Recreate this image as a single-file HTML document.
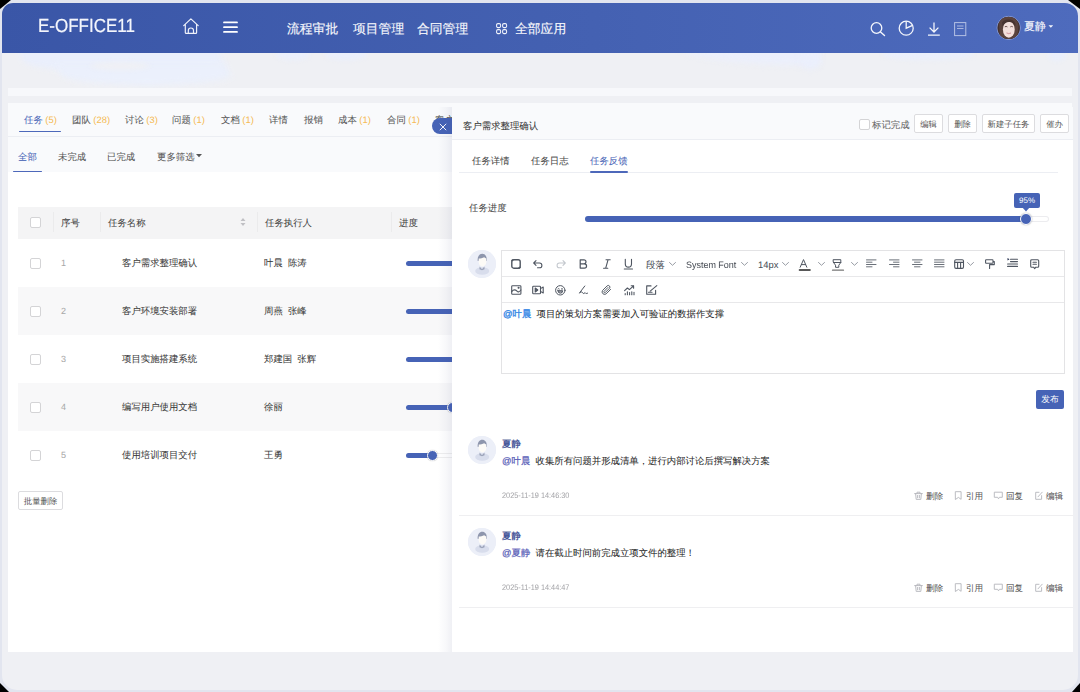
<!DOCTYPE html>
<html><head><meta charset="utf-8">
<style>
*{margin:0;padding:0;box-sizing:border-box}
html,body{width:1080px;height:692px;overflow:hidden;background:#000}
body{font-family:"Liberation Sans",sans-serif;color:#333;position:relative;text-rendering:geometricPrecision}
.frame{position:absolute;left:0;top:0;width:1080px;height:692px;background:#e2e5ef;
 clip-path:polygon(11px 0,1068px 0,1080px 9px,1080px 683px,1072px 692px,9px 692px,0 683px,0 9px)}
.screen{position:absolute;left:2px;top:3px;width:1076px;height:687px;background:#eff0f4;border-radius:11px 13px 15px 15px;overflow:hidden}
.pg{position:absolute;left:-2px;top:-3px;width:1080px;height:692px}
.a{position:absolute}
.t{position:absolute;white-space:nowrap;line-height:12px;height:12px}
.hdr{position:absolute;left:0;top:0;width:1080px;height:53px;background:linear-gradient(90deg,#3a56a7 0%,#4461b2 55%,#4e6bbd 100%)}
.nav{font-size:12.8px;color:#f6f7fc;line-height:14px;height:14px;-webkit-text-stroke:0.15px #f6f7fc}
svg{position:absolute;overflow:visible}
.tb{font-size:9.4px;color:#555;line-height:12px;-webkit-text-stroke:0.04px currentColor}
.tb b{font-weight:normal;color:#f6bb54}
.ac{font-size:8.6px!important;color:#555}
.cb{width:11px;height:11px;border:1px solid #d4d4d6;border-radius:2px;background:#fff}
.av{width:28px;height:28px;border-radius:50%;background:#e9ecf5;overflow:hidden}
.btn{border:1px solid #dcdcdf;border-radius:2px;background:#fff;font-size:8.4px;color:#555;text-align:center;line-height:18px;white-space:nowrap}
</style></head><body>
<div class="frame"></div>
<div class="screen"><div class="pg">
  <!-- header -->
  <div class="hdr"></div>
  <div class="t" style="left:38px;top:16.7px;font-size:19px;line-height:20px;height:20px;color:#f4f6fc;-webkit-text-stroke:0.2px #f4f6fc;transform:scaleX(0.895);transform-origin:0 0">E-OFFICE11</div>
  <svg style="left:183px;top:18px" width="17" height="17" viewBox="0 0 17 17"><path d="M0.7 7.6 L7.9 0.9 L15.2 7.6 M2.3 6.2 V14.5 Q2.3 15.4 3.2 15.4 H12.7 Q13.6 15.4 13.6 14.5 V6.2 M5.3 15.4 V12.6 A2.6 2.6 0 0 1 10.5 12.6 V15.4" fill="none" stroke="#eef1fa" stroke-width="1.2" stroke-linejoin="round" stroke-linecap="round"/></svg>
  <svg style="left:223px;top:21px" width="15" height="12" viewBox="0 0 15 12"><path d="M1 1.4H14M1 6.2H14M1 10.9H14" stroke="#fff" stroke-width="1.8" stroke-linecap="round"/></svg>
  <div class="t nav" style="left:287px;top:22px">流程审批</div>
  <div class="t nav" style="left:353px;top:22px">项目管理</div>
  <div class="t nav" style="left:417px;top:22px">合同管理</div>
  <svg style="left:495.5px;top:23px" width="12" height="12" viewBox="0 0 12 12"><g fill="none" stroke="#f0f3fb" stroke-width="1.05"><rect x="0.6" y="0.6" width="4" height="4" rx="1.3"/><rect x="6.6" y="0.6" width="4" height="4" rx="1.3"/><rect x="0.6" y="6.6" width="4" height="4" rx="1.3"/><rect x="6.6" y="6.6" width="4" height="4" rx="1.3"/></g></svg>
  <div class="t nav" style="left:515px;top:22px">全部应用</div>
  <svg style="left:870px;top:22.3px" width="16" height="14" viewBox="0 0 16 14"><circle cx="6.5" cy="6" r="5.3" fill="none" stroke="#f4f6fc" stroke-width="1.3"/><path d="M10.5 10 L14.5 13.5" stroke="#f4f6fc" stroke-width="1.4" stroke-linecap="round"/></svg>
  <svg style="left:898px;top:20px" width="17" height="17" viewBox="0 0 17 17"><circle cx="8.2" cy="8.2" r="7" fill="none" stroke="#f4f6fc" stroke-width="1.3"/><path d="M8.2 1.2 V8.2 L14.6 5.3" fill="none" stroke="#f4f6fc" stroke-width="1.3"/></svg>
  <svg style="left:927px;top:20px" width="14" height="16" viewBox="0 0 14 16"><path d="M7 2.4 V12 M2.6 7.6 L7 12 L11.4 7.6 M1 15.2 H12.8" fill="none" stroke="#f4f6fc" stroke-width="1.3"/></svg>
  <svg style="left:954px;top:22px" width="13" height="14" viewBox="0 0 13 14"><rect x="0.6" y="0.6" width="11.2" height="13" fill="none" stroke="#b4c0e4" stroke-width="1"/><path d="M3 4H9.5M3 6.5H9.5" stroke="#b4c0e4" stroke-width="0.9"/></svg>
  <svg style="left:996px;top:16px" width="26" height="24" viewBox="0 0 26 24"><circle cx="12.7" cy="11.9" r="11.6" fill="none" stroke="#aeb9e6" stroke-width="0.8" opacity="0.8"/><defs><clipPath id="hc"><circle cx="12.7" cy="11.9" r="11.2"/></clipPath></defs><g clip-path="url(#hc)"><rect width="26" height="24" fill="#45322e"/><path d="M3 8 C4 2 9 0.5 13 0.8 C18 1 22 4 22.5 10 L21 24 H4Z" fill="#5a423c"/><ellipse cx="12.8" cy="13.4" rx="5.9" ry="8.3" fill="#f3dfda"/><path d="M6 6.5 C8 3.5 11 3.2 13 3.6 C15.5 3.2 18 4.5 19.6 7.8 L19.2 10.5 C17.5 7 15 5.8 13.2 6 C10.8 5.8 8 7.5 6.6 10.5Z" fill="#47332f"/><path d="M8.8 10.8 Q10.2 10 11.4 10.9 M14.3 10.9 Q15.5 10 16.8 10.8" stroke="#5d4240" stroke-width="0.9" fill="none"/><path d="M10.6 17 Q12.8 18.6 15 17 Q12.8 18 10.6 17Z" fill="#c98088" stroke="#d49aa0" stroke-width="0.7"/><path d="M7 21.5 C9.5 23.5 16 23.5 18.5 21.5 L19 24 H7Z" fill="#111"/></g></svg>
  <div class="t nav" style="left:1024px;top:21px;font-size:11px;line-height:12px;height:12px">夏静</div>
  <svg style="left:1048px;top:25px" width="6" height="4" viewBox="0 0 6 4"><path d="M0.5 0.3H5.2L2.85 2.8Z" fill="#f4f6fc"/></svg>

  <!-- faint strip -->
  <div class="a" style="left:8px;top:88px;width:1064px;height:8px;background:#f7f8fb"></div>
  <div class="a" style="left:0;top:53px;width:1080px;height:35px;overflow:hidden">
    <div class="a" style="left:22px;top:-6px;width:200px;height:26px;background:#eaeffc;border-radius:0 0 40% 50%;filter:blur(3px);transform:skewX(20deg)"></div>
    <div class="a" style="left:60px;top:10px;width:170px;height:22px;background:#ebf0fc;border-radius:0 0 50% 50%;filter:blur(3px);transform:skewX(20deg)"></div>
    <div class="a" style="left:90px;top:9px;width:60px;height:8px;background:#eff0f5;border-radius:50%;filter:blur(2px)"></div>
    <div class="a" style="left:276px;top:-4px;width:34px;height:11px;background:#eaeffc;border-radius:50%;filter:blur(2px)"></div>
    <div class="a" style="left:325px;top:-4px;width:42px;height:11px;background:#eaeffc;border-radius:50%;filter:blur(2px)"></div>
    <div class="a" style="left:680px;top:-6px;width:140px;height:18px;background:#ebeffc;border-radius:0 0 0 100%;filter:blur(3px)"></div>
    <div class="a" style="left:800px;top:-6px;width:20px;height:22px;background:#ebeffc;border-radius:50%;filter:blur(3px)"></div>
    <div class="a" style="left:882px;top:-4px;width:92px;height:11px;background:#eaeffc;border-radius:50%;filter:blur(2px)"></div>
    <div class="a" style="left:1048px;top:-4px;width:18px;height:12px;background:#eaeffc;border-radius:50%;filter:blur(2px)"></div>
  </div>
  <!-- left panel -->
  <div class="a" style="left:8px;top:103px;width:1064px;height:549px;background:#fff"></div>
  <div class="a" style="left:8px;top:103px;width:1064px;height:69px;background:#f9fafc"></div>
  <div class="a" style="left:8px;top:136px;width:1064px;height:1px;background:#eceef3"></div>
  <div class="a" style="left:18.5px;top:130.5px;width:42.5px;height:1.8px;border-radius:1px;background:#4d68ba"></div>
  <div class="a" style="left:12.5px;top:170.6px;width:29.5px;height:1.8px;border-radius:1px;background:#4d68ba"></div>

  <!-- tabs -->
  <div class="t tb" style="left:24px;top:114px;color:#4663b6">任务 <b>(5)</b></div>
  <div class="t tb" style="left:72px;top:114px">团队 <b>(28)</b></div>
  <div class="t tb" style="left:125px;top:114px">讨论 <b>(3)</b></div>
  <div class="t tb" style="left:172px;top:114px">问题 <b>(1)</b></div>
  <div class="t tb" style="left:221px;top:114px">文档 <b>(1)</b></div>
  <div class="t tb" style="left:269px;top:114px">详情</div>
  <div class="t tb" style="left:304px;top:114px">报销</div>
  <div class="t tb" style="left:338px;top:114px">成本 <b>(1)</b></div>
  <div class="t tb" style="left:387px;top:114px">合同 <b>(1)</b></div>
  <div class="t tb" style="left:435px;top:114px">客户</div>
  <div class="t tb" style="left:18px;top:151px;color:#4663b6">全部</div>
  <div class="t tb" style="left:58px;top:151px">未完成</div>
  <div class="t tb" style="left:107px;top:151px">已完成</div>
  <div class="t tb" style="left:157px;top:151px">更多筛选</div>
  <svg style="left:196px;top:154px" width="6" height="4" viewBox="0 0 6 4"><path d="M0 0H6L3 3.2Z" fill="#555"/></svg>
  <!-- table header -->
  <div class="a" style="left:18px;top:207px;width:434px;height:32px;background:#f4f4f5"></div>
  <div class="a cb" style="left:30px;top:217px"></div>
  <div class="a" style="left:53px;top:212px;width:1px;height:20px;background:#ebebec"></div>
  <div class="a" style="left:100px;top:212px;width:1px;height:20px;background:#ebebec"></div>
  <div class="a" style="left:257px;top:212px;width:1px;height:20px;background:#ebebec"></div>
  <div class="a" style="left:391px;top:212px;width:1px;height:20px;background:#ebebec"></div>
  <div class="t tb" style="left:61px;top:217px;color:#404040">序号</div>
  <div class="t tb" style="left:108px;top:217px;color:#404040">任务名称</div>
  <svg style="left:240px;top:217px" width="6" height="10" viewBox="0 0 6 10"><path d="M0.5 4 L3 1 L5.5 4Z M0.5 6 L3 9 L5.5 6Z" fill="#c0c0c4"/></svg>
  <div class="t tb" style="left:265px;top:217px;color:#404040">任务执行人</div>
  <div class="t tb" style="left:399px;top:217px;color:#404040">进度</div>
  <!-- rows -->
  <div class="a" style="left:18px;top:287px;width:434px;height:48px;background:#f8f8f9"></div>
  <div class="a" style="left:18px;top:383px;width:434px;height:48px;background:#f8f8f9"></div>
  <div class="a cb" style="left:30px;top:258px"></div>
  <div class="t tb" style="left:61px;top:257px;color:#a8a8a8;font-size:9px">1</div>
  <div class="t tb" style="left:122px;top:257px;color:#383838">客户需求整理确认</div>
  <div class="t tb" style="left:264px;top:257px;color:#383838">叶晨&nbsp;&nbsp;陈涛</div>
  <div class="a cb" style="left:30px;top:306px"></div>
  <div class="t tb" style="left:61px;top:305px;color:#a8a8a8;font-size:9px">2</div>
  <div class="t tb" style="left:122px;top:305px;color:#383838">客户环境安装部署</div>
  <div class="t tb" style="left:264px;top:305px;color:#383838">周燕&nbsp;&nbsp;张峰</div>
  <div class="a cb" style="left:30px;top:354px"></div>
  <div class="t tb" style="left:61px;top:353px;color:#a8a8a8;font-size:9px">3</div>
  <div class="t tb" style="left:122px;top:353px;color:#383838">项目实施搭建系统</div>
  <div class="t tb" style="left:264px;top:353px;color:#383838">郑建国&nbsp;&nbsp;张辉</div>
  <div class="a cb" style="left:30px;top:402px"></div>
  <div class="t tb" style="left:61px;top:401px;color:#a8a8a8;font-size:9px">4</div>
  <div class="t tb" style="left:122px;top:401px;color:#383838">编写用户使用文档</div>
  <div class="t tb" style="left:264px;top:401px;color:#383838">徐丽</div>
  <div class="a cb" style="left:30px;top:450px"></div>
  <div class="t tb" style="left:61px;top:449px;color:#a8a8a8;font-size:9px">5</div>
  <div class="t tb" style="left:122px;top:449px;color:#383838">使用培训项目交付</div>
  <div class="t tb" style="left:264px;top:449px;color:#383838">王勇</div>

  <div class="a" style="left:406px;top:261px;width:60px;height:5px;border-radius:3px;background:#4663b6"></div>
  <div class="a" style="left:406px;top:309px;width:60px;height:5px;border-radius:3px;background:#4663b6"></div>
  <div class="a" style="left:406px;top:357px;width:60px;height:5px;border-radius:3px;background:#4663b6"></div>
  <div class="a" style="left:406px;top:405px;width:60px;height:5px;border-radius:3px;background:#4663b6"></div>
  <div class="a" style="left:447px;top:402px;width:11px;height:11px;border-radius:50%;background:#4663b6;border:1.5px solid #fff;box-shadow:0 0 1px rgba(0,0,0,.3)"></div>
  <div class="a" style="left:406px;top:453px;width:60px;height:5px;border-radius:3px;background:#fff;box-shadow:inset 0 0 0 1px #eee"></div>
  <div class="a" style="left:406px;top:453px;width:27px;height:5px;border-radius:3px;background:#4663b6"></div>
  <div class="a" style="left:427px;top:450px;width:11px;height:11px;border-radius:50%;background:#4663b6;border:1.5px solid #fff;box-shadow:0 0 1px rgba(0,0,0,.3)"></div>
  <div class="a btn" style="left:18px;top:491px;width:45px;height:19px">批量删除</div>

  <!-- close button -->
  <div class="a" style="left:432px;top:118px;width:22px;height:16px;border-radius:8px 0 0 8px;background:#4663b6"></div>
  <svg style="left:438.5px;top:122.5px" width="8" height="8" viewBox="0 0 8 8"><path d="M0.8 0.8L7.2 7.2M7.2 0.8L0.8 7.2" stroke="#fff" stroke-width="0.95"/></svg>
  <!-- right panel -->
  <div class="a" style="left:438px;top:107px;width:14px;height:545px;background:linear-gradient(90deg,rgba(40,50,110,0) 0%,rgba(40,50,110,.035) 60%,rgba(40,50,110,.075) 100%)"></div>
  <div class="a" style="left:452px;top:107px;width:621px;height:545px;background:#fff"></div>
  <div class="a" style="left:452px;top:107px;width:621px;height:33px;background:#f9fafc;border-bottom:1px solid #eceef3"></div>
  <div class="t tb" style="left:463px;top:120px;color:#333">客户需求整理确认</div>
  <div class="a cb" style="left:859px;top:119px"></div>
  <div class="t tb" style="left:872px;top:119px;color:#666">标记完成</div>
  <div class="a btn" style="left:914px;top:114px;width:29px;height:19px">编辑</div>
  <div class="a btn" style="left:948px;top:114px;width:29px;height:19px">删除</div>
  <div class="a btn" style="left:982px;top:114px;width:53px;height:19px">新建子任务</div>
  <div class="a btn" style="left:1040px;top:114px;width:29px;height:19px">催办</div>
  <!-- right tabs -->
  <div class="t tb" style="left:472px;top:155px;color:#444">任务详情</div>
  <div class="t tb" style="left:531px;top:155px;color:#444">任务日志</div>
  <div class="t tb" style="left:590px;top:155px;color:#4663b6">任务反馈</div>
  <div class="a" style="left:459px;top:172px;width:599px;height:1px;background:#eceef3"></div>
  <div class="a" style="left:590px;top:171px;width:38px;height:1.8px;border-radius:1px;background:#4d68ba"></div>
  <!-- progress -->
  <div class="t tb" style="left:469px;top:202px;color:#444">任务进度</div>
  <div class="a" style="left:585px;top:216px;width:464px;height:6px;border-radius:3px;background:#fff;box-shadow:inset 0 0 0 1px #ececef"></div>
  <div class="a" style="left:585px;top:216px;width:441px;height:6px;border-radius:3px;background:#4663b6"></div>
  <div class="a" style="left:1020px;top:213px;width:12px;height:12px;border-radius:50%;background:#4663b6;border:1.5px solid #fff;box-shadow:0 0 1.5px rgba(0,0,0,.35)"></div>
  <div class="a" style="left:1014px;top:193px;width:26px;height:15px;border-radius:2px;background:#4663b6;color:#fff;font-size:8px;line-height:15px;text-align:center">95%</div>
  <svg style="left:1022px;top:207px" width="8" height="5" viewBox="0 0 8 5"><path d="M0 0H8L4 4.5Z" fill="#4663b6"/></svg>

  <!-- editor avatar -->
  <div class="a av" style="left:468px;top:250px"><svg width="28" height="28" viewBox="0 0 28 28" style="position:absolute;left:0;top:0"><circle cx="14" cy="14" r="14" fill="#eceff8"/><ellipse cx="14.2" cy="21" rx="7" ry="3.8" fill="#d8ddec"/><path d="M11.6 16.6 L14 19.2 L16.4 16.6 L16.6 19.3 L14 20.2 L11.4 19.3Z" fill="#9ca3b9"/><path d="M9.6 10.8 C9.4 6 11.6 3.8 14.2 3.8 C17 3.8 19 5.8 18.8 10.8 Z" fill="#8e96ad"/><path d="M10.7 8.6 C12.5 8.6 14.5 8 16.2 7.3 C17 8 17.6 8.4 18.3 8.6 V12.4 C18.3 14.4 16.1 16.3 14.5 16.5 C12.8 16.3 10.7 14.4 10.7 12.4 Z" fill="#fdfbf7"/></svg></div>
  <!-- editor -->
  <div class="a" style="left:501px;top:250px;width:564px;height:124px;border:1px solid #e3e3e5;background:#fff"></div>
  <div class="a" style="left:502px;top:276px;width:562px;height:1px;background:#e8e8ea"></div>
  <div class="a" style="left:502px;top:302px;width:562px;height:1px;background:#e8e8ea"></div>

  <!-- toolbar row1 -->
  <svg style="left:511px;top:259px" width="10" height="10" viewBox="0 0 10 10"><g fill="none" stroke="#4f5661" stroke-width="1.4" stroke-linecap="round" stroke-linejoin="round"><rect x="0.8" y="0.8" width="8.4" height="8.4" rx="2"/><path d="M1 1.5 L1.8 1 M8.2 9 L9 8.4" stroke-width="1.6"/></g></svg>
  <svg style="left:533px;top:260px" width="10" height="8" viewBox="0 0 10 8"><g fill="none" stroke="#4f5661" stroke-width="1.1" stroke-linecap="round" stroke-linejoin="round"><path d="M3 0.7 L0.7 3 L3 5.3 M0.7 3 H6.5 a2.4 2.4 0 0 1 0 4.8 H4.5"/></g></svg>
  <svg style="left:556px;top:260px" width="10" height="8" viewBox="0 0 10 8"><g fill="none" stroke="#c4c8ce" stroke-width="1.1" stroke-linecap="round" stroke-linejoin="round"><path d="M7 0.7 L9.3 3 L7 5.3 M9.3 3 H3.5 a2.4 2.4 0 0 0 0 4.8 H5.5"/></g></svg>
  <svg style="left:579px;top:259px" width="9" height="10" viewBox="0 0 9 10"><g fill="none" stroke="#4f5661" stroke-width="1.2" stroke-linecap="round" stroke-linejoin="round"><path d="M1.2 0.8 H5 a2 2 0 0 1 0 4 H1.2 Z M1.2 4.8 H5.4 a2.1 2.1 0 0 1 0 4.3 H1.2 Z"/></g></svg>
  <svg style="left:603px;top:259px" width="8" height="10" viewBox="0 0 8 10"><g fill="none" stroke="#4f5661" stroke-width="1.1" stroke-linecap="round" stroke-linejoin="round"><path d="M3 0.7 H7.2 M0.6 9.2 H4.8 M5.1 0.7 L2.7 9.2"/></g></svg>
  <svg style="left:624px;top:259px" width="9" height="11" viewBox="0 0 9 11"><g fill="none" stroke="#4f5661" stroke-width="1.1" stroke-linecap="round" stroke-linejoin="round"><path d="M1.3 0.3 V5 a3.1 3.1 0 0 0 6.2 0 V0.3 M0.3 10 H8.5"/></g></svg>
  <div class="t tb" style="left:646px;top:259px;color:#4a4f57">段落</div>
  <svg style="left:669px;top:262px" width="7" height="4" viewBox="0 0 7 4"><g fill="none" stroke="#8a9099" stroke-width="0.9" stroke-linecap="round" stroke-linejoin="round"><path d="M0.5 0.5 L3.5 3.3 L6.5 0.5"/></g></svg>
  <div class="t tb" style="left:686px;top:259px;color:#4a4f57;transform:scaleX(0.955);transform-origin:0 0">System Font</div>
  <svg style="left:741px;top:262px" width="7" height="4" viewBox="0 0 7 4"><g fill="none" stroke="#8a9099" stroke-width="0.9" stroke-linecap="round" stroke-linejoin="round"><path d="M0.5 0.5 L3.5 3.3 L6.5 0.5"/></g></svg>
  <div class="t tb" style="left:758px;top:259px;color:#4a4f57">14px</div>
  <svg style="left:782px;top:262px" width="7" height="4" viewBox="0 0 7 4"><g fill="none" stroke="#8a9099" stroke-width="0.9" stroke-linecap="round" stroke-linejoin="round"><path d="M0.5 0.5 L3.5 3.3 L6.5 0.5"/></g></svg>
  <svg style="left:799px;top:259px" width="12" height="12" viewBox="0 0 12 12"><g fill="none" stroke="#4f5661" stroke-width="1.0" stroke-linecap="round" stroke-linejoin="round"><path d="M1.2 8.2 L4.5 0.6 L7.8 8.2 M2.4 5.6 H6.6"/><path d="M0.5 11 H11" stroke="#222" stroke-width="1.6"/></g></svg>
  <svg style="left:818px;top:262px" width="7" height="4" viewBox="0 0 7 4"><g fill="none" stroke="#8a9099" stroke-width="0.9" stroke-linecap="round" stroke-linejoin="round"><path d="M0.5 0.5 L3.5 3.3 L6.5 0.5"/></g></svg>
  <svg style="left:832px;top:259px" width="12" height="12" viewBox="0 0 12 12"><g fill="none" stroke="#4f5661" stroke-width="1.0" stroke-linecap="round" stroke-linejoin="round"><path d="M1.5 0.7 H8.8 V3.5 L6.8 6.2 V8.3 H3.5 V6.2 L1.5 3.5 Z M1.5 3.5 H8.8"/><path d="M0.5 11.2 H11.5" stroke="#777" stroke-width="1.2"/></g></svg>
  <svg style="left:851px;top:262px" width="7" height="4" viewBox="0 0 7 4"><g fill="none" stroke="#8a9099" stroke-width="0.9" stroke-linecap="round" stroke-linejoin="round"><path d="M0.5 0.5 L3.5 3.3 L6.5 0.5"/></g></svg>
  <svg style="left:866px;top:259px" width="11" height="9" viewBox="0 0 11 9"><g fill="none" stroke="#4f5661" stroke-width="0.85" stroke-linecap="round" stroke-linejoin="round"><path d="M0.5 0.9 H10"/><path d="M0.5 3.2 H6"/><path d="M0.5 5.5 H10"/><path d="M0.5 7.8 H6"/></g></svg>
  <svg style="left:889px;top:259px" width="11" height="9" viewBox="0 0 11 9"><g fill="none" stroke="#4f5661" stroke-width="0.85" stroke-linecap="round" stroke-linejoin="round"><path d="M0.5 0.9 H10"/><path d="M4.5 3.2 H10"/><path d="M0.5 5.5 H10"/><path d="M4.5 7.8 H10"/></g></svg>
  <svg style="left:912px;top:259px" width="11" height="9" viewBox="0 0 11 9"><g fill="none" stroke="#4f5661" stroke-width="0.85" stroke-linecap="round" stroke-linejoin="round"><path d="M0.5 0.9 H10"/><path d="M2.5 3.2 H8"/><path d="M0.5 5.5 H10"/><path d="M2.5 7.8 H8"/></g></svg>
  <svg style="left:934px;top:259px" width="11" height="9" viewBox="0 0 11 9"><g fill="none" stroke="#4f5661" stroke-width="0.85" stroke-linecap="round" stroke-linejoin="round"><path d="M0.5 0.9 H10"/><path d="M0.5 3.2 H10"/><path d="M0.5 5.5 H10"/><path d="M0.5 7.8 H10"/></g></svg>
  <svg style="left:954px;top:259px" width="10" height="10" viewBox="0 0 10 10"><g fill="none" stroke="#4f5661" stroke-width="1.1" stroke-linecap="round" stroke-linejoin="round"><rect x="0.7" y="0.8" width="8.8" height="8.6" rx="1.3"/><path d="M0.7 3.4 H9.5 M3.6 3.4 V9.4 M6.6 3.4 V9.4"/></g></svg>
  <svg style="left:967px;top:262px" width="7" height="4" viewBox="0 0 7 4"><g fill="none" stroke="#8a9099" stroke-width="0.9" stroke-linecap="round" stroke-linejoin="round"><path d="M0.5 0.5 L3.5 3.3 L6.5 0.5"/></g></svg>
  <svg style="left:985px;top:259px" width="10" height="10" viewBox="0 0 10 10"><g fill="none" stroke="#4f5661" stroke-width="1.1" stroke-linecap="round" stroke-linejoin="round"><path d="M1.2 0.8 H7.4 a0.6 0.6 0 0 1 0.6 0.6 V3.6 a0.6 0.6 0 0 1 -0.6 0.6 H1.2 a0.6 0.6 0 0 1 -0.6 -0.6 V1.4 a0.6 0.6 0 0 1 0.6 -0.6 Z M8 2.5 H9.3 V5.6 H4.6 V9.4"/></g></svg>
  <svg style="left:1007px;top:258px" width="11" height="10" viewBox="0 0 11 10"><g fill="none" stroke="#4f5661" stroke-width="1.1" stroke-linecap="round" stroke-linejoin="round"><path d="M3.5 1.2 H10.5 M3.5 3.6 H10.5 M0.6 6 H10.5 M0.6 8.4 H10.5"/><path d="M0.5 0 L2.5 1.3 L0.5 2.6Z" fill="#1e2a4a" stroke="none"/></g></svg>
  <svg style="left:1030px;top:259px" width="10" height="11" viewBox="0 0 10 11"><g fill="none" stroke="#4f5661" stroke-width="1.1" stroke-linecap="round" stroke-linejoin="round"><path d="M1.7 0.7 H7.7 a1 1 0 0 1 1 1 V7.2 a1 1 0 0 1 -1 1 H5.8 L4.7 9.6 L3.6 8.2 H1.7 a1 1 0 0 1 -1 -1 V1.7 a1 1 0 0 1 1 -1Z M3 3.3 H6.4 M3 5.3 H6.4"/></g></svg>
  <!-- toolbar row2 -->
  <svg style="left:511px;top:285px" width="11" height="10" viewBox="0 0 11 10"><g fill="none" stroke="#4f5661" stroke-width="1.1" stroke-linecap="round" stroke-linejoin="round"><rect x="0.7" y="0.8" width="9.2" height="8.4" rx="0.8"/><path d="M0.7 6.6 C2.5 4.2 4.5 4.6 6 6.2 S8.6 6.4 9.9 5"/><circle cx="7.6" cy="2.8" r="0.5" fill="#4f5661"/></g></svg>
  <svg style="left:532px;top:285px" width="12" height="10" viewBox="0 0 12 10"><g fill="none" stroke="#4f5661" stroke-width="1.1" stroke-linecap="round" stroke-linejoin="round"><rect x="0.7" y="1.2" width="7.8" height="7.6" rx="0.8"/><path d="M3.2 3 L5.8 5 L3.2 7 Z" fill="#4f5661"/><path d="M8.5 3.6 L11.2 2 V8 L8.5 6.4"/></g></svg>
  <svg style="left:555px;top:285px" width="11" height="11" viewBox="0 0 11 11"><g fill="none" stroke="#4f5661" stroke-width="1" stroke-linecap="round" stroke-linejoin="round"><circle cx="5.3" cy="5.3" r="4.7"/><path d="M2.9 3.9 Q3.6 3.1 4.3 3.9 M6.3 3.9 Q7 3.1 7.7 3.9"/><path d="M2.9 5.7 H7.7 Q7.5 8.2 5.3 8.2 Q3.1 8.2 2.9 5.7 Z M3.6 6.9 H7"/></g></svg>
  <svg style="left:579px;top:285px" width="10" height="10" viewBox="0 0 10 10"><g fill="none" stroke="#4f5661" stroke-width="1.0" stroke-linecap="round" stroke-linejoin="round"><path d="M0.6 7.8 L5.8 1 M0.8 8 C1.8 6.4 3 6.4 3.6 7.8 C4.2 9 5.2 8.6 6 7.6 C6.6 8.6 7.6 8.8 8.6 8.2"/></g></svg>
  <svg style="left:601px;top:285px" width="11" height="11" viewBox="0 0 11 11"><g fill="none" stroke="#4f5661" stroke-width="0.95" stroke-linecap="round" stroke-linejoin="round"><path d="M9.6 4.4 L5.1 8.9 A2.5 2.5 0 0 1 1.6 5.4 L6.1 0.9 A1.7 1.7 0 0 1 8.5 3.3 L4.3 7.5 A0.8 0.8 0 0 1 3.1 6.3 L6.9 2.5"/></g></svg>
  <svg style="left:624px;top:285px" width="11" height="11" viewBox="0 0 11 11"><g fill="none" stroke="#4f5661" stroke-width="1.1" stroke-linecap="round" stroke-linejoin="round"><path d="M0.6 5.6 L3.4 3 L5.4 4.6 L9.6 0.8 M7.2 0.8 H9.6 V3.2" /><path d="M1.2 9.8 V8.4 M3.4 9.8 V6.8 M5.6 9.8 V7.6 M7.8 9.8 V6.2 M10 9.8 V7.2" stroke-dasharray="1.2 0.7"/></g></svg>
  <svg style="left:646px;top:285px" width="12" height="11" viewBox="0 0 12 11"><g fill="none" stroke="#4f5661" stroke-width="1.1" stroke-linecap="round" stroke-linejoin="round"><path d="M9.6 5.4 V9.3 H0.7 V0.9 H5"/><path d="M4.2 6.2 L10.8 0.6"/><path d="M2.5 7.3 H6"/></g></svg>
  <div class="t tb" style="left:503px;top:308px"><span style="color:#3a8ae6;-webkit-text-stroke:0.35px #3a8ae6">@叶晨</span>&nbsp;&nbsp;<span style="color:#262626">项目的策划方案需要加入可验证的数据作支撑</span></div>
  <div class="a" style="left:1036px;top:390px;width:28px;height:19px;border-radius:2px;background:#4663b6;color:#fff;font-size:8.8px;line-height:19px;text-align:center">发布</div>
  <div class="a av" style="left:468px;top:436px"><svg width="28" height="28" viewBox="0 0 28 28" style="position:absolute;left:0;top:0"><circle cx="14" cy="14" r="14" fill="#eceff8"/><ellipse cx="14.2" cy="21" rx="7" ry="3.8" fill="#d8ddec"/><path d="M11.6 16.6 L14 19.2 L16.4 16.6 L16.6 19.3 L14 20.2 L11.4 19.3Z" fill="#9ca3b9"/><path d="M9.6 10.8 C9.4 6 11.6 3.8 14.2 3.8 C17 3.8 19 5.8 18.8 10.8 Z" fill="#8e96ad"/><path d="M10.7 8.6 C12.5 8.6 14.5 8 16.2 7.3 C17 8 17.6 8.4 18.3 8.6 V12.4 C18.3 14.4 16.1 16.3 14.5 16.5 C12.8 16.3 10.7 14.4 10.7 12.4 Z" fill="#fdfbf7"/></svg></div>
  <div class="t tb" style="left:502px;top:438px;color:#3a4b93;-webkit-text-stroke:0.28px #3a4b93">夏静</div>
  <div class="t tb" style="left:502px;top:455px"><span style="color:#5960b8;-webkit-text-stroke:0.2px #5960b8">@叶晨</span>&nbsp;&nbsp;<span style="color:#262626">收集所有问题并形成清单，进行内部讨论后撰写解决方案</span></div>
  <div class="t tb" style="left:502px;top:490px;color:#a4a4a8;font-size:8px;transform:scaleX(0.915);transform-origin:0 0">2025-11-19 14:46:30</div>
  <svg style="left:914px;top:491px" width="9" height="9" viewBox="0 0 9 9"><g fill="none" stroke="#b4b6bb" stroke-width="0.9" stroke-linecap="round" stroke-linejoin="round"><path d="M0.6 2.6 H8.4 M3 2.6 V1.2 H6 V2.6 M1.6 2.6 L2.2 8.4 H6.8 L7.4 2.6 M3.6 4.4 V6.8 M5.4 4.4 V6.8"/></g></svg>
  <svg style="left:955px;top:491px" width="7" height="9" viewBox="0 0 7 9"><g fill="none" stroke="#b4b6bb" stroke-width="0.9" stroke-linecap="round" stroke-linejoin="round"><path d="M0.7 0.7 H6.1 V8.3 L3.4 6.4 L0.7 8.3 Z"/></g></svg>
  <svg style="left:994px;top:491px" width="9" height="9" viewBox="0 0 9 9"><g fill="none" stroke="#b4b6bb" stroke-width="0.9" stroke-linecap="round" stroke-linejoin="round"><path d="M0.7 1.2 H8.3 V6.3 H5.4 L4.5 7.8 L3.6 6.3 H0.7 Z"/></g></svg>
  <svg style="left:1035px;top:491px" width="8" height="9" viewBox="0 0 8 9"><g fill="none" stroke="#b4b6bb" stroke-width="0.9" stroke-linecap="round" stroke-linejoin="round"><path d="M6.6 4.6 V8.3 H0.7 V1.3 H4"/><path d="M3 5.8 L7.2 1.2"/></g></svg>
  <div class="t tb ac" style="left:926px;top:490px">删除</div>
  <div class="t tb ac" style="left:966px;top:490px">引用</div>
  <div class="t tb ac" style="left:1006px;top:490px">回复</div>
  <div class="t tb ac" style="left:1046px;top:490px">编辑</div>
  <div class="a" style="left:459px;top:515px;width:614px;height:1px;background:#efeff1"></div>
  <div class="a av" style="left:468px;top:528px"><svg width="28" height="28" viewBox="0 0 28 28" style="position:absolute;left:0;top:0"><circle cx="14" cy="14" r="14" fill="#eceff8"/><ellipse cx="14.2" cy="21" rx="7" ry="3.8" fill="#d8ddec"/><path d="M11.6 16.6 L14 19.2 L16.4 16.6 L16.6 19.3 L14 20.2 L11.4 19.3Z" fill="#9ca3b9"/><path d="M9.6 10.8 C9.4 6 11.6 3.8 14.2 3.8 C17 3.8 19 5.8 18.8 10.8 Z" fill="#8e96ad"/><path d="M10.7 8.6 C12.5 8.6 14.5 8 16.2 7.3 C17 8 17.6 8.4 18.3 8.6 V12.4 C18.3 14.4 16.1 16.3 14.5 16.5 C12.8 16.3 10.7 14.4 10.7 12.4 Z" fill="#fdfbf7"/></svg></div>
  <div class="t tb" style="left:502px;top:530px;color:#3a4b93;-webkit-text-stroke:0.28px #3a4b93">夏静</div>
  <div class="t tb" style="left:502px;top:547px"><span style="color:#5960b8;-webkit-text-stroke:0.2px #5960b8">@夏静</span>&nbsp;&nbsp;<span style="color:#262626">请在截止时间前完成立项文件的整理！</span></div>
  <div class="t tb" style="left:502px;top:582px;color:#a4a4a8;font-size:8px;transform:scaleX(0.915);transform-origin:0 0">2025-11-19 14:44:47</div>
  <svg style="left:914px;top:583px" width="9" height="9" viewBox="0 0 9 9"><g fill="none" stroke="#b4b6bb" stroke-width="0.9" stroke-linecap="round" stroke-linejoin="round"><path d="M0.6 2.6 H8.4 M3 2.6 V1.2 H6 V2.6 M1.6 2.6 L2.2 8.4 H6.8 L7.4 2.6 M3.6 4.4 V6.8 M5.4 4.4 V6.8"/></g></svg>
  <svg style="left:955px;top:583px" width="7" height="9" viewBox="0 0 7 9"><g fill="none" stroke="#b4b6bb" stroke-width="0.9" stroke-linecap="round" stroke-linejoin="round"><path d="M0.7 0.7 H6.1 V8.3 L3.4 6.4 L0.7 8.3 Z"/></g></svg>
  <svg style="left:994px;top:583px" width="9" height="9" viewBox="0 0 9 9"><g fill="none" stroke="#b4b6bb" stroke-width="0.9" stroke-linecap="round" stroke-linejoin="round"><path d="M0.7 1.2 H8.3 V6.3 H5.4 L4.5 7.8 L3.6 6.3 H0.7 Z"/></g></svg>
  <svg style="left:1035px;top:583px" width="8" height="9" viewBox="0 0 8 9"><g fill="none" stroke="#b4b6bb" stroke-width="0.9" stroke-linecap="round" stroke-linejoin="round"><path d="M6.6 4.6 V8.3 H0.7 V1.3 H4"/><path d="M3 5.8 L7.2 1.2"/></g></svg>
  <div class="t tb ac" style="left:926px;top:582px">删除</div>
  <div class="t tb ac" style="left:966px;top:582px">引用</div>
  <div class="t tb ac" style="left:1006px;top:582px">回复</div>
  <div class="t tb ac" style="left:1046px;top:582px">编辑</div>
  <div class="a" style="left:459px;top:607px;width:614px;height:1px;background:#efeff1"></div>
</div></div>
</body></html>
